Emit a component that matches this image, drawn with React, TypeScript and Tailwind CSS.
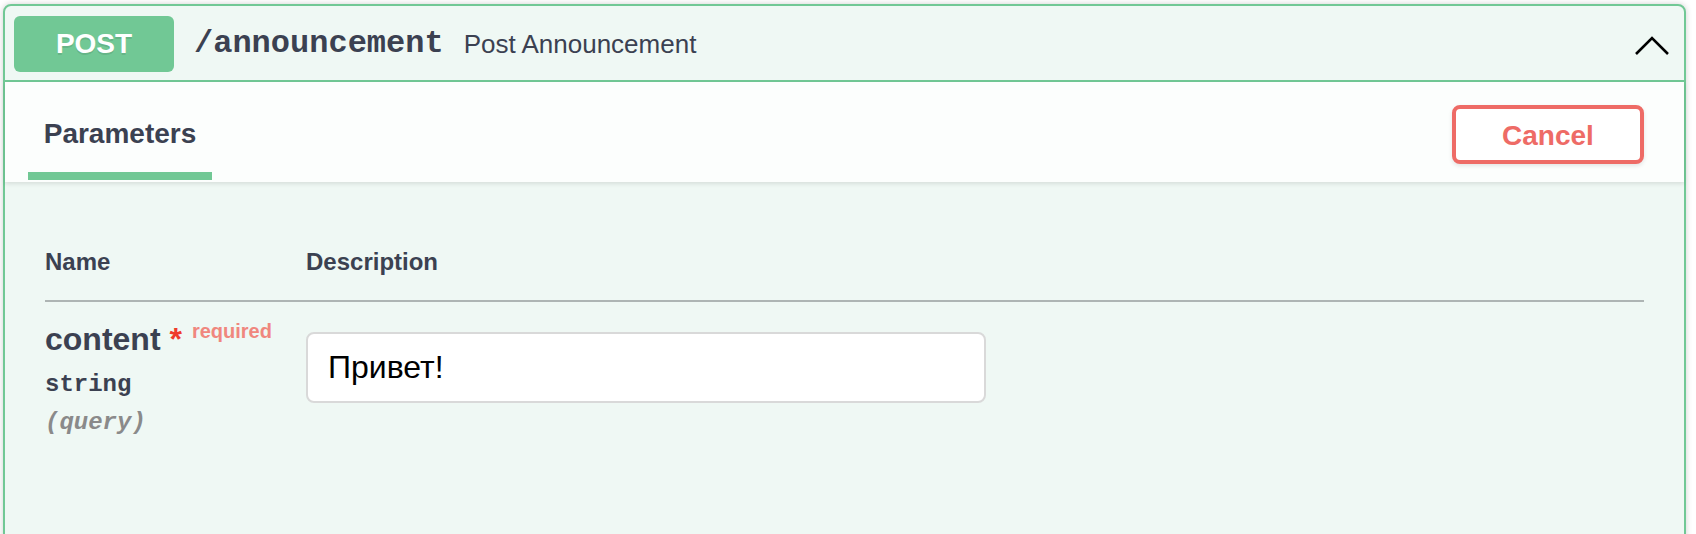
export default function App() {
  return (
    <div className="w-[1696px] h-[534px] overflow-hidden bg-white pl-[3px] pr-[10px] pt-[4px] font-['Liberation_Sans',Arial,sans-serif] text-[#3b4151]">
      <div className="h-[600px] rounded-[8px] border-2 border-[#71c895] bg-[#eff8f4] shadow-[0_0_6px_rgba(0,0,0,0.19)]">
        {/* summary */}
        <div className="flex items-center border-b-2 border-[#71c895] pl-[9px] pr-[12px] pt-[10px] pb-[8px]">
          <div className="flex h-[56px] w-[160px] items-center justify-center rounded-[6px] bg-[#71c895] text-[28px] font-bold text-white [text-shadow:0_2px_0_rgba(0,0,0,0.1)]">
            POST
          </div>
          <span className="px-[20px] font-['Liberation_Mono',monospace] text-[32px] font-bold leading-[40px]">
            /announcement
          </span>
          <span className="flex-1 text-[26px] leading-[32px]">Post Announcement</span>
          <svg width="40" height="40" viewBox="0 0 40 40" className="mt-[2px]">
            <polyline points="4,29 20,13 36,29" fill="none" stroke="#000" strokeWidth="2.6" />
          </svg>
        </div>

        {/* section header */}
        <div className="relative flex h-[100px] justify-between bg-[#fcfefd] pl-[23px] pr-[40px] shadow-[0_2px_4px_rgba(0,0,0,0.1)]">
          <div className="flex flex-col items-center justify-end pb-[2px]">
            <span className="text-[28px] font-bold leading-[32px]">Parameters</span>
            <div className="mt-[22px] h-[8px] w-[184px] bg-[#71c895]" />
          </div>
          <button className="mt-[5px] self-center h-[59px] w-[192px] rounded-[8px] border-[4px] border-[#ee6b66] bg-white pt-[3px] text-[28px] font-bold text-[#ee6b66] shadow-[0_2px_4px_rgba(0,0,0,0.1)]">
            Cancel
          </button>
        </div>

        {/* parameters table */}
        <div className="px-[40px] pt-[66px]">
          <div className="grid grid-cols-[261px_1fr] border-b-2 border-[#aeb5b4] pb-[24px] text-[24px] font-bold leading-[28px]">
            <span>Name</span>
            <span>Description</span>
          </div>
          <div className="grid grid-cols-[261px_1fr]">
            <div className="pt-[19px]">
              <div className="text-[32px] font-bold leading-[37px]">
                content
                <span className="text-[#ef3b2c]">&nbsp;*</span>
                <span className="relative -top-[12px] px-[10px] text-[20px] text-[#f0877e]">required</span>
              </div>
              <div className="mt-[9px] font-['Liberation_Mono',monospace] text-[24px] font-bold leading-[28px]">
                string
              </div>
              <div className="mt-[10px] font-['Liberation_Mono',monospace] text-[24px] font-bold italic leading-[28px] text-[#8a8a8a]">
                (query)
              </div>
            </div>
            <div className="pt-[30px]">
              <input
                readOnly
                defaultValue="Привет!"
                className="h-[71px] w-[680px] rounded-[8px] border-2 border-[#d9d9d9] bg-white px-[20px] text-[32px] text-black outline-none"
              />
            </div>
          </div>
        </div>
      </div>
    </div>
  );
}
